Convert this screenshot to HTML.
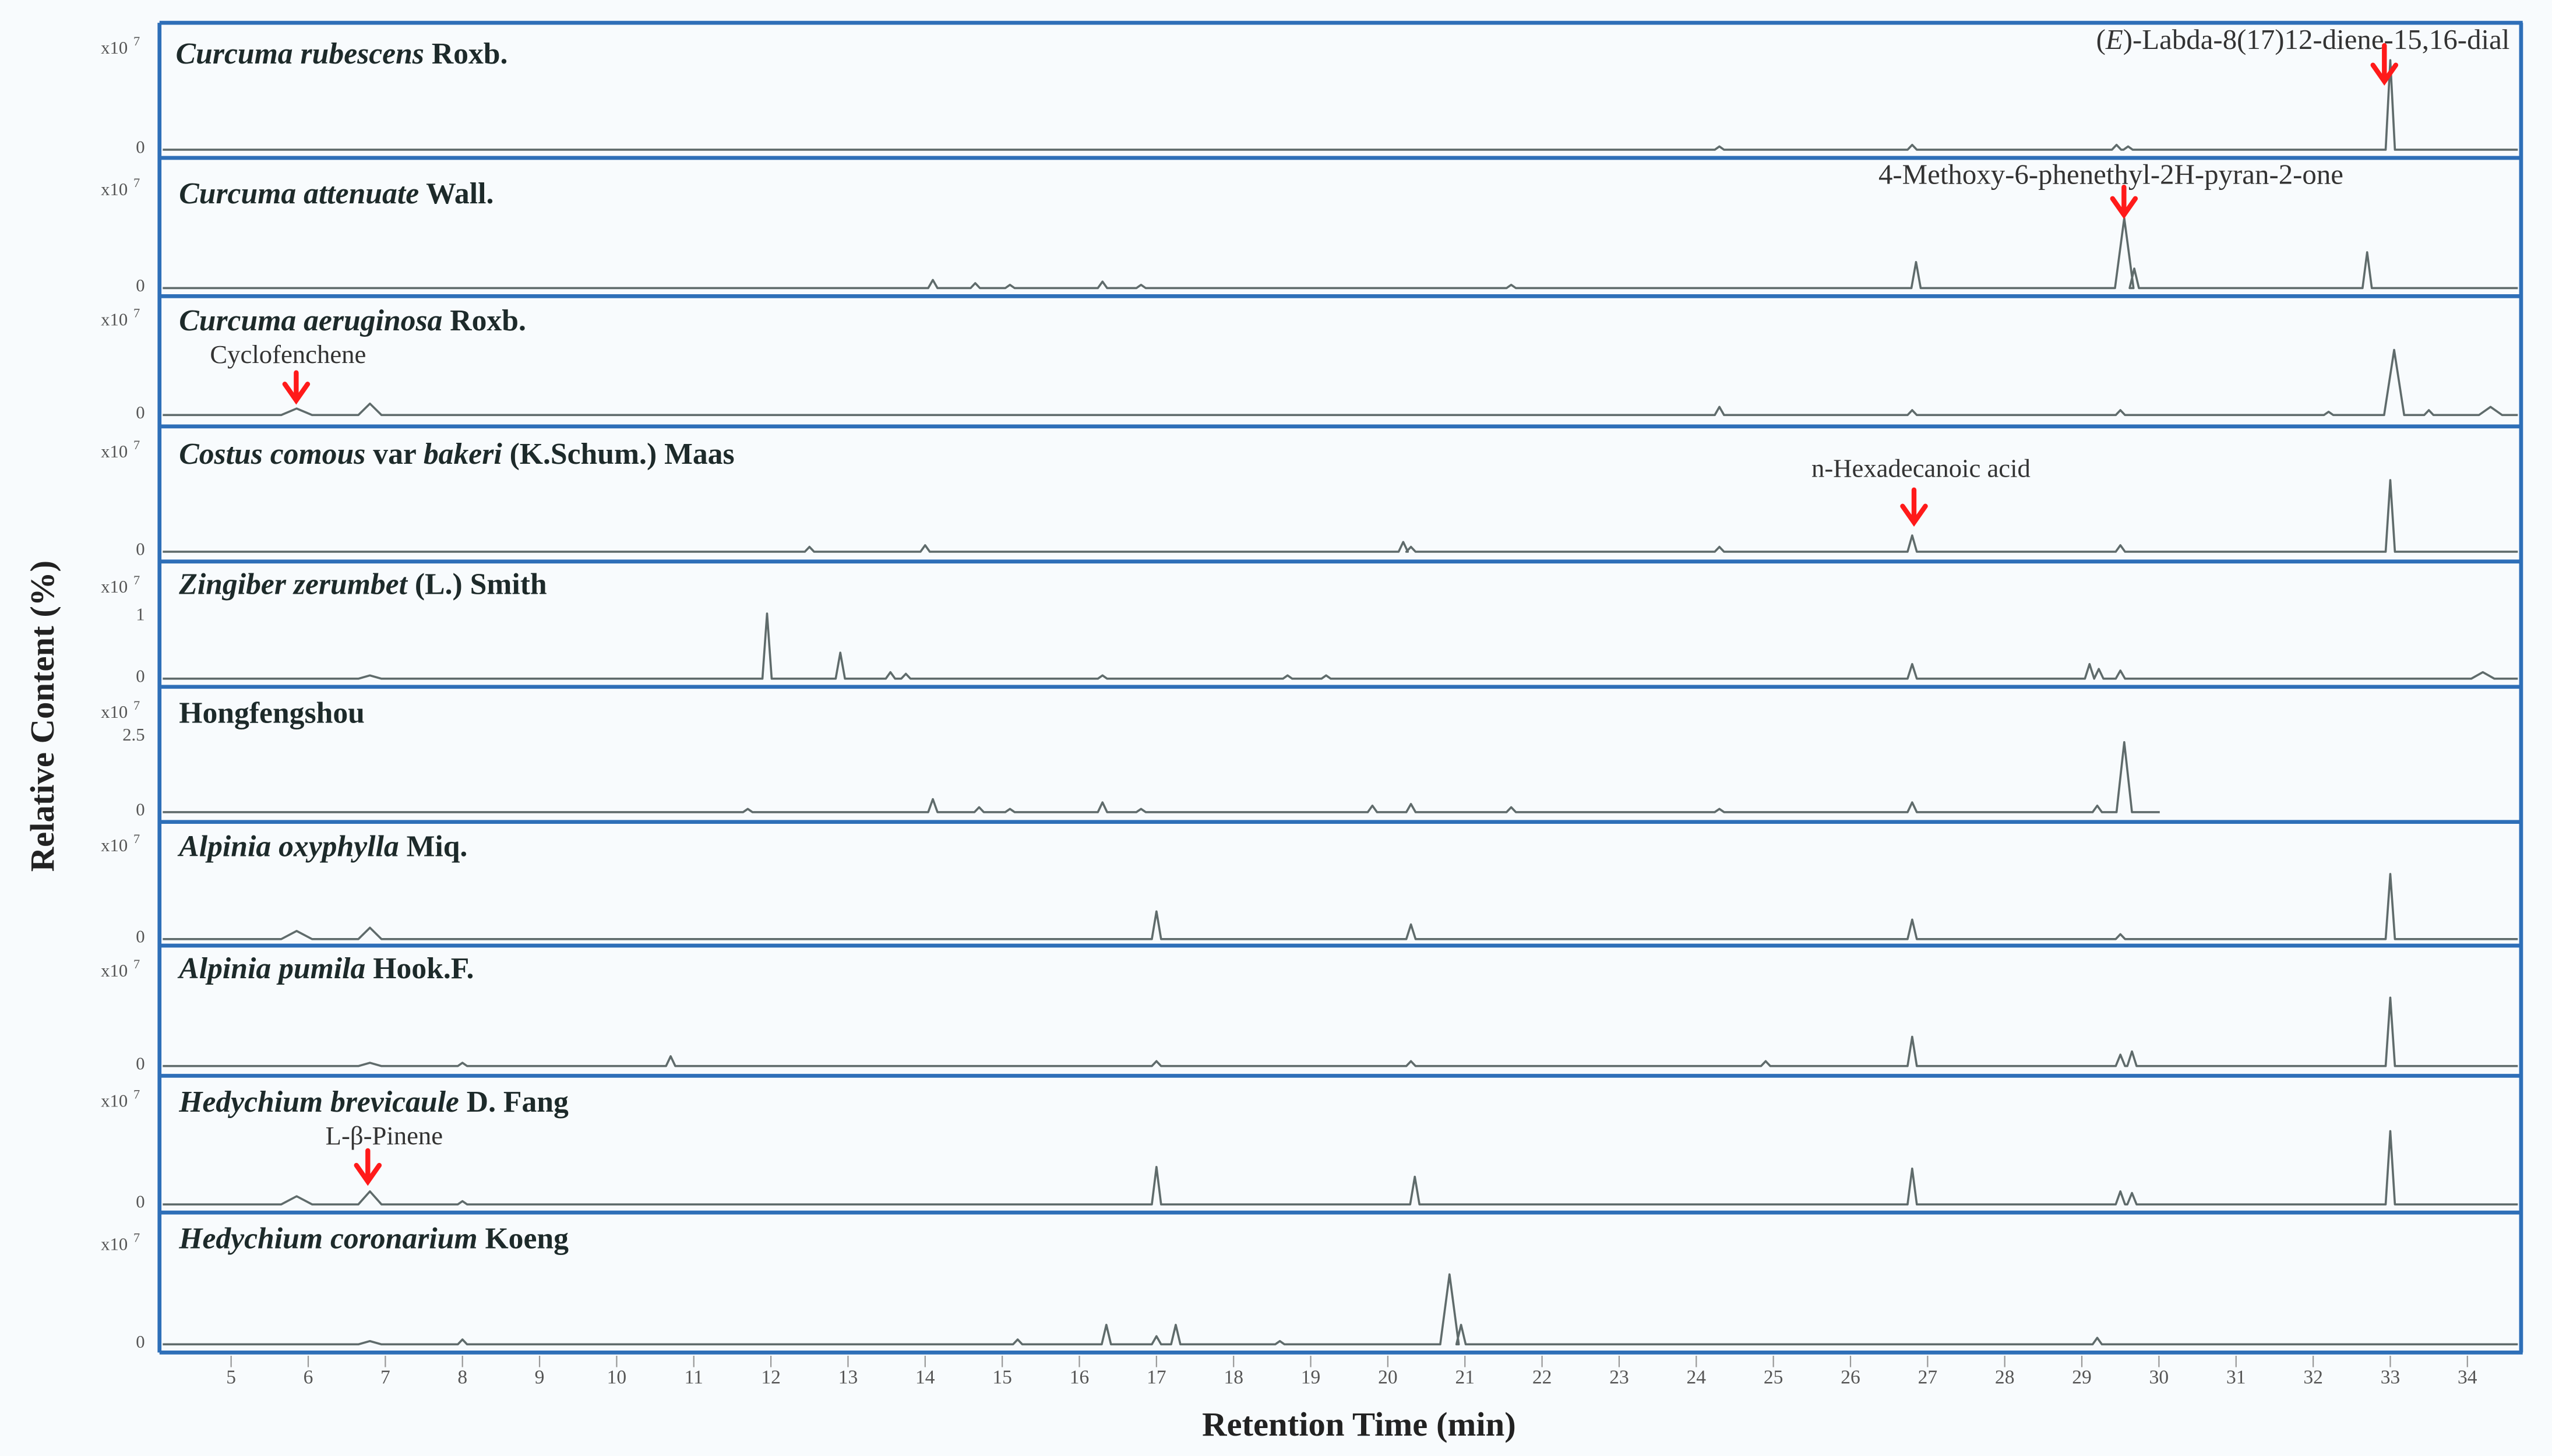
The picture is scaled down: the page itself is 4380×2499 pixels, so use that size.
<!DOCTYPE html>
<html><head><meta charset="utf-8"><style>
html,body{margin:0;padding:0;background:#f8fbfd;}
svg{display:block;}
.t{font-family:"Liberation Serif",serif;font-weight:bold;font-size:18.5px;fill:#1d2a2a;}
.a{font-family:"Liberation Serif",serif;font-size:17.5px;fill:#333;}
.a2{font-family:"Liberation Serif",serif;font-size:16px;fill:#333;}
.y{font-family:"Liberation Serif",serif;font-size:11px;fill:#555;}
.k{font-family:"Liberation Serif",serif;font-size:12px;fill:#555;}
.ax{font-family:"Liberation Serif",serif;font-weight:bold;font-size:21px;fill:#222;}
</style></head><body>
<svg id="s" width="4380" height="2499" viewBox="0 0 1568 894.6" preserveAspectRatio="none" xmlns="http://www.w3.org/2000/svg">
<rect x="0" y="0" width="1568" height="895" fill="#f8fbfd"/>
<g id="frames" stroke="#2e6fb8" stroke-width="2.4" fill="none">
<line x1="98" y1="14" x2="1550" y2="14"/><line x1="98" y1="97" x2="1550" y2="97"/>
<line x1="98" y1="182" x2="1550" y2="182"/><line x1="98" y1="262" x2="1550" y2="262"/>
<line x1="98" y1="345" x2="1550" y2="345"/><line x1="98" y1="422" x2="1550" y2="422"/>
<line x1="98" y1="505" x2="1550" y2="505"/><line x1="98" y1="581" x2="1550" y2="581"/>
<line x1="98" y1="661" x2="1550" y2="661"/><line x1="98" y1="745" x2="1550" y2="745"/>
<line x1="98" y1="831" x2="1550" y2="831"/>
<line x1="98" y1="14" x2="98" y2="831"/><line x1="1549" y1="14" x2="1549" y2="831"/>
</g>
<g id="traces" stroke="#5f6b6b" stroke-width="1.3" fill="none" stroke-linejoin="round"></g>
<g fill="none" stroke="#999" stroke-width="0.8" id="ticks"></g>
<g class="t">
<text x="108" y="39"><tspan font-style="italic">Curcuma rubescens</tspan> Roxb.</text>
<text x="110" y="125"><tspan font-style="italic">Curcuma attenuate</tspan> Wall.</text>
<text x="110" y="203"><tspan font-style="italic">Curcuma aeruginosa</tspan> Roxb.</text>
<text x="110" y="285"><tspan font-style="italic">Costus comous</tspan> var <tspan font-style="italic">bakeri</tspan>   (K.Schum.) Maas</text>
<text x="110" y="365"><tspan font-style="italic">Zingiber zerumbet</tspan> (L.) Smith</text>
<text x="110" y="444">Hongfengshou</text>
<text x="110" y="526"><tspan font-style="italic">Alpinia oxyphylla</tspan> Miq.</text>
<text x="110" y="601"><tspan font-style="italic">Alpinia pumila</tspan> Hook.F.</text>
<text x="110" y="683"><tspan font-style="italic">Hedychium brevicaule</tspan> D. Fang</text>
<text x="110" y="767"><tspan font-style="italic">Hedychium coronarium</tspan> Koeng</text>
</g>
<g class="a">
<text x="1542" y="30" text-anchor="end">(<tspan font-style="italic">E</tspan>)-Labda-8(17)12-diene-15,16-dial</text>
<text x="1297" y="113" text-anchor="middle">4-Methoxy-6-phenethyl-2H-pyran-2-one</text>
</g>
<g class="a2">
<text x="129" y="223">Cyclofenchene</text>
<text x="1113" y="293">n-Hexadecanoic acid</text>
<text x="200" y="703">L-β-Pinene</text>
</g>
<g stroke="#ff1a1a" stroke-width="3" fill="none" stroke-linecap="round">
<path d="M1465 28 V50 M1458 40 L1465 50 L1472 40"/>
<path d="M1305 115 V132 M1298 122 L1305 132 L1312 122"/>
<path d="M182 229 V246 M175 236 L182 246 L189 236"/>
<path d="M1176 301 V321 M1169 311 L1176 321 L1183 311"/>
<path d="M226 707 V726 M219 716 L226 726 L233 716"/>
</g>
<g class="y" id="ylab"></g>
<text class="ax" transform="translate(33,440) rotate(-90)" text-anchor="middle">Relative Content (%)</text>
<text class="ax" x="835" y="882" text-anchor="middle">Retention Time (min)</text>
</svg>
<script>
var X=function(t){return 142+(t-5)*47.38;};
var P=[
[92,[[24.3,2],[26.8,3],[29.45,3],[29.6,2],[33.0,55]]],
[177,[[14.1,5],[14.65,3],[15.1,2],[16.3,4],[16.8,2],[21.6,2],[26.85,16],[29.55,43,.12],[29.68,12],[32.7,22]]],
[255,[[5.85,4,.2],[6.8,7,.15],[24.3,5],[26.8,3],[29.5,3],[32.2,2],[33.05,40,.13],[33.5,3],[34.3,5,.15]]],
[339,[[12.5,3],[14.0,4],[20.2,6],[20.3,3],[24.3,3],[26.8,10],[29.5,4],[33.0,44]]],
[417,[[6.8,2,.15],[11.95,40],[12.9,16],[13.55,4],[13.75,3],[16.3,2],[18.7,2],[19.2,2],[26.8,9],[29.1,9],[29.22,6],[29.5,5],[34.2,4,.15]]],
[499,[[11.7,2],[14.1,8],[14.7,3],[15.1,2],[16.3,6],[16.8,2],[19.8,4],[20.3,5],[21.6,3],[24.3,2],[26.8,6],[29.2,4],[29.55,43,.1]]],
[577,[[5.85,5,.2],[6.8,7,.15],[17.0,17],[20.3,9],[26.8,12],[29.5,3],[33.0,40]]],
[655,[[6.8,2,.15],[8,2],[10.7,6],[17.0,3],[20.3,3],[24.9,3],[26.8,18],[29.5,7],[29.65,9],[33.0,42]]],
[740,[[5.85,5,.2],[6.8,8,.15],[8,2],[17.0,23],[20.35,17],[26.8,22],[29.5,8],[29.65,7],[33.0,45]]],
[826,[[6.8,2,.15],[8,3],[15.2,3],[16.35,12],[17.0,5],[17.25,12],[18.6,2],[20.8,43,.12],[20.95,12],[29.2,4]]]];
var g=document.getElementById('traces'),ns='http://www.w3.org/2000/svg';
P.forEach(function(p,i){var b=p[0],pk=p[1].slice().sort(function(a,c){return a[0]-c[0];});
var end=(i==5)?1327:1547,d='M100 '+b;
pk.forEach(function(k){var w=(k[2]||.06)*47.38,x=X(k[0]);d+=' L'+(x-w)+' '+b+' L'+x+' '+(b-k[1])+' L'+(x+w)+' '+b;});
d+=' L'+end+' '+b;var e=document.createElementNS(ns,'path');e.setAttribute('d',d);g.appendChild(e);});
var tk=document.getElementById('ticks'),s=document.getElementById('s');
for(var t=5;t<=34;t++){var x=X(t),l=document.createElementNS(ns,'line');l.setAttribute('x1',x);l.setAttribute('x2',x);l.setAttribute('y1',833);l.setAttribute('y2',840);tk.appendChild(l);
var tx=document.createElementNS(ns,'text');tx.setAttribute('class','k');tx.setAttribute('x',x);tx.setAttribute('y',850);tx.setAttribute('text-anchor','middle');tx.textContent=t;s.appendChild(tx);}
var yl=document.getElementById('ylab'),tops=[29,116,196,277,360,437,519,596,676,764];
function T(x,y,str,a){var e=document.createElementNS(ns,'text');e.setAttribute('x',x);e.setAttribute('y',y);if(a)e.setAttribute('text-anchor',a);e.textContent=str;yl.appendChild(e);return e;}
P.forEach(function(p,i){T(62,tops[i]+4,'x10');var s7=T(82,tops[i]-1,'7');s7.setAttribute('font-size','8');T(89,p[0]+2,'0','end');});
T(89,381,'1','end');T(89,455,'2.5','end');
</script>
</body></html>
